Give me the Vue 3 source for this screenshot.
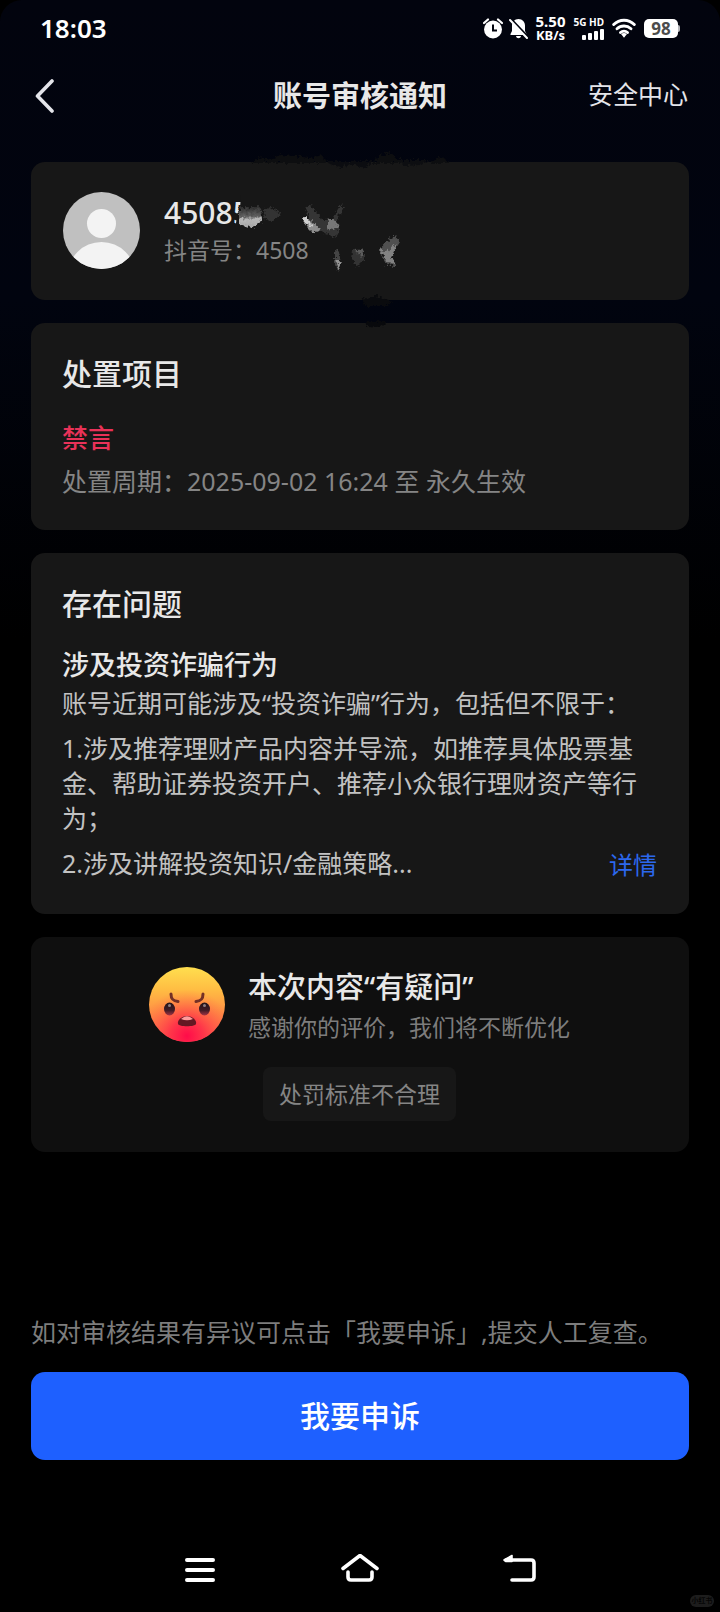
<script setup>
const problems = [
  '1.涉及推荐理财产品内容并导流，如推荐具体股票基金、帮助证券投资开户、推荐小众银行理财资产等行为；',
  '2.涉及讲解投资知识/金融策略...',
]
const signalBars = [5, 7, 9, 11]
</script>

<template>
  <div class="screen">
    <div class="phone">
      <div class="status">
        <span class="clock">18:03</span>
        <div class="status-icons">
          <svg class="alarm" viewBox="0 0 20 21" width="20" height="21" aria-hidden="true">
            <circle cx="10" cy="11.500" r="9" fill="#fff" />
            <path d="M1 5L5 1.500M19 5L15 1.500" stroke="#fff" stroke-width="2.200" stroke-linecap="round" />
            <path d="M10 6.500V12.500H14" fill="none" stroke="#02040e" stroke-width="2" />
          </svg>
          <svg class="bell" viewBox="0 0 19 21" width="19" height="21" aria-hidden="true">
            <path d="M9.500 1C5.500 1 3 4 3 7.500V13L1.500 16V17H17.500V16L16 13V7.500C16 4 13.500 1 9.500 1ZM7 18H12C11.500 21 7.500 21 7 18Z" fill="#fff" />
            <path d="M0.500 0L19 19.500" stroke="#02040e" stroke-width="3" />
            <path d="M1 2L18 20" stroke="#fff" stroke-width="2" stroke-linecap="round" />
          </svg>
          <div class="speed"><span>5.50</span><span>KB/s</span></div>
          <div class="network">
            <span>5G HD</span>
            <div class="bars">
              <i v-for="h in signalBars" :key="h" :style="{ height: h + 'px' }"></i>
            </div>
          </div>
          <svg class="wifi" viewBox="0 0 24 20" width="24" height="20" aria-hidden="true">
            <g fill="none" stroke="#fff" stroke-width="2.900" stroke-linecap="round">
              <path d="M1.700 6.500C7.500 .8 16.500 .8 22.300 6.500" />
              <path d="M5 10.700C9 7 15 7 19 10.700" />
              <path d="M8.500 14.500C10.500 12.700 13.500 12.700 15.500 14.500" />
            </g>
            <path d="M9 16Q12 14 15 16L12 19.800Z" fill="#fff" />
          </svg>
          <div class="battery"><span>98</span></div>
        </div>
      </div>

      <header class="topbar">
        <button class="back" aria-label="返回">
          <svg viewBox="0 0 20 36" width="20" height="36" aria-hidden="true">
            <path d="M17 3L2.500 18L17 33" fill="none" stroke="#e4e5ea" stroke-width="3.600" stroke-linecap="round" stroke-linejoin="round" />
          </svg>
        </button>
        <h1>账号审核通知</h1>
        <a href="#" class="safety">安全中心</a>
      </header>

      <main>
        <section class="card profile">
          <svg class="avatar" viewBox="0 0 77 77" width="77" height="77" aria-hidden="true">
            <defs><clipPath id="face"><circle cx="38.500" cy="38.500" r="38.500" /></clipPath></defs>
            <g clip-path="url(#face)">
              <rect width="77" height="77" fill="#c0c0c0" />
              <circle cx="38.500" cy="31.500" r="14.500" fill="#f3f3f3" />
              <circle cx="38.500" cy="84" r="34" fill="#f3f3f3" />
            </g>
          </svg>
          <div class="who">
            <strong>45085</strong>
            <span>抖音号：4508</span>
          </div>
          <svg class="smudge" viewBox="215 145 250 190" width="250" height="190" aria-hidden="true">
            <defs>
              <filter id="rough" x="-10%" y="-20%" width="120%" height="140%" color-interpolation-filters="sRGB">
                <feTurbulence type="fractalNoise" baseFrequency=".35" numOctaves="2" seed="4" result="n" />
                <feDisplacementMap in="SourceGraphic" in2="n" scale="7" xChannelSelector="R" yChannelSelector="G" />
              </filter>
              <linearGradient id="fade" x1="0" y1="0" x2="0" y2="1">
                <stop offset="0" stop-color="#2c2c2c" /><stop offset=".45" stop-color="#606060" /><stop offset=".6" stop-color="#b8b8b8" /><stop offset="1" stop-color="#a5a5a5" />
              </linearGradient>
            </defs>
            <path d="M241 195H275V230H236V223L238 212L240 208Z" fill="#171717" />
            <g filter="url(#rough)">
              <path d="M252 163L259 157L268 160L280 155L296 156L309 158L322 155L327 163ZM372 163L380 155L390 153L399 160L430 163L440 157L449 161V163Z" fill="#0d0e10" />
              <path d="M326 161H372L366 168L350 164L342 168L330 164Z" fill="#0b0c10" />
              <path d="M398 160H430L420 165L404 166Z" fill="#0d0e11" />
              <path d="M362 299L376 296L392 301L388 306H366Z" fill="#0a0b0e" />
              <path d="M366 322H388L380 327L368 326Z" fill="#08090c" />
              <path d="M239 207L261 207L262 221L252 228L239 224Z" fill="url(#fade)" />
              <path d="M264 209L272 208L281 214L272 222L265 219Z" fill="#333" />
              <path d="M306 208L311 204L315 212L324 220L332 219L341 204L344 208L337 220L340 226L337 237L322 232L310 220Z" fill="#353535" />
              <path d="M303 217L310 220L321 230L313 233L306 226Z" fill="#8e8e8e" />
              <path d="M303 216L307 218L313 227L304 222Z" fill="#d0d0d0" />
              <path d="M328 220L333 219L340 227L326 230Z" fill="#777" />
              <path d="M335 250L339 251L341 264L338 270L335 264Z" fill="#444" />
              <path d="M336 260H341L339 271Z" fill="#929292" />
              <path d="M353 250L364 249L364 260L357 267L352 258Z" fill="#333" />
              <path d="M355 250L364 250L363 256L357 254Z" fill="#5c5c5c" />
              <path d="M388 240L395 236L400 242L391 256L395 266L387 265L379 250Z" fill="#505050" />
              <path d="M378 249L386 252L397 243L392 256L396 266L388 262Z" fill="#828282" />
            </g>
          </svg>
        </section>

        <section class="card measure">
          <h2>处置项目</h2>
          <h3 class="ban">禁言</h3>
          <p>处置周期：2025-09-02 16:24 至 永久生效</p>
        </section>

        <section class="card issue">
          <h2>存在问题</h2>
          <h3>涉及投资诈骗行为</h3>
          <p>账号近期可能涉及“投资诈骗”行为，包括但不限于：</p>
          <p class="item">{{ problems[0] }}</p>
          <div class="item last">
            <p>{{ problems[1] }}</p>
            <a href="#">详情</a>
          </div>
        </section>

        <section class="card feedback">
          <div class="rating">
            <svg viewBox="0 0 76 75" width="76" height="75" aria-hidden="true">
              <defs>
                <linearGradient id="skin" x1="0" y1="0" x2="0" y2="1">
                  <stop offset="0" stop-color="#ffdf4e" /><stop offset=".3" stop-color="#ffbd43" /><stop offset=".65" stop-color="#ff8945" /><stop offset="1" stop-color="#ff5a50" />
                </linearGradient>
                <radialGradient id="blush" cx=".5" cy=".92" r=".62">
                  <stop offset="0" stop-color="#ff0b49" /><stop offset=".35" stop-color="#ff2b49" stop-opacity=".85" /><stop offset="1" stop-color="#ff6845" stop-opacity="0" />
                </radialGradient>
                <linearGradient id="eye" x1="0" y1="0" x2="0" y2="1">
                  <stop offset="0" stop-color="#21161b" /><stop offset=".6" stop-color="#421b25" /><stop offset="1" stop-color="#a43345" />
                </linearGradient>
              </defs>
              <ellipse cx="38" cy="37.500" rx="38" ry="37.500" fill="url(#skin)" />
              <ellipse cx="38" cy="37.500" rx="38" ry="37.500" fill="url(#blush)" />
              <path d="M22 27C22 32 24 34 29 34.500M54 27C54 32 52 34 47 34.500" fill="none" stroke="#743026" stroke-width="3" stroke-linecap="round" />
              <ellipse cx="20.500" cy="42" rx="5.500" ry="6.500" fill="url(#eye)" />
              <ellipse cx="55.500" cy="42" rx="5.500" ry="6.500" fill="url(#eye)" />
              <circle cx="20.500" cy="38.500" r="1.500" fill="#8d7e84" />
              <circle cx="55.500" cy="38.500" r="1.500" fill="#8d7e84" />
              <path d="M29 57C28 53 33 49 38 49C43 49 48 53 47 57C46 60 30 60 29 57Z" fill="#641823" />
              <path d="M32 52Q38 46.500 44 52Q38 54.500 32 52Z" fill="#ff9c9b" />
            </svg>
            <div class="rating-text">
              <h2>本次内容“有疑问”</h2>
              <p>感谢你的评价，我们将不断优化</p>
            </div>
          </div>
          <button class="reason">处罚标准不合理</button>
        </section>
      </main>

      <footer>
        <p>如对审核结果有异议可点击「我要申诉」,提交人工复查。</p>
        <button class="appeal">我要申诉</button>
      </footer>

      <nav class="system" aria-label="系统导航">
        <button aria-label="最近任务">
          <svg viewBox="0 0 40 32" width="40" height="32" aria-hidden="true">
            <path d="M7 6H33M7 16H33M7 26H33" stroke="#fff" stroke-width="4" stroke-linecap="round" />
          </svg>
        </button>
        <button aria-label="主页">
          <svg viewBox="0 0 40 32" width="40" height="32" aria-hidden="true">
            <path d="M3 14.500L20 1.500L37 14.500" fill="none" stroke="#fff" stroke-width="3.600" stroke-linecap="round" stroke-linejoin="round" />
            <path d="M8 18V23Q8 26 11 26H29Q32 26 32 23V18" fill="none" stroke="#fff" stroke-width="3.600" stroke-linecap="round" />
          </svg>
        </button>
        <button aria-label="返回上一页">
          <svg viewBox="0 0 40 32" width="40" height="32" aria-hidden="true">
            <path d="M6 6H31Q34 6 34 9V23Q34 26 31 26H12" fill="none" stroke="#fff" stroke-width="3.600" stroke-linecap="round" />
            <path d="M4 6L12 1.500V7.500H6Z" fill="#fff" stroke="#fff" stroke-width="1.600" stroke-linejoin="round" />
          </svg>
        </button>
      </nav>
      <span class="mark">小红书</span>
    </div>
  </div>
</template>

<style>
html,
body {
  margin: 0;
  background: #000;
}
</style>

<style scoped>
.screen {
  background: #000;
  color: #e8e8e8;
  font-family: "Noto Sans", "Noto Sans CJK SC", sans-serif;
}
.phone {
  position: relative;
  display: flex;
  flex-direction: column;
  min-height: 100vh;
  border-radius: 22px 22px 0 0;
  background: linear-gradient(#02040e 0, #01040f 300px, #000 640px);
}
h1, h2, h3, p {
  margin: 0;
  font-weight: 400;
}
button {
  margin: 0;
  padding: 0;
  border: 0;
  background: none;
  color: inherit;
  font-family: inherit;
  cursor: pointer;
}
a {
  text-decoration: none;
}
svg {
  display: block;
  flex: none;
}

.status {
  display: flex;
  align-items: center;
  justify-content: space-between;
  height: 56px;
  padding: 0 40px;
  color: #fff;
}
.clock {
  font-size: 26px;
  font-weight: 600;
}
.status-icons {
  display: flex;
  align-items: center;
  gap: 8px;
}
.alarm {
  margin-right: -2px;
}
.speed {
  display: flex;
  flex-direction: column;
  align-items: center;
  font-size: 15px;
  font-weight: 700;
  line-height: 14px;
}
.speed span:last-child {
  font-size: 13px;
}
.network {
  display: flex;
  flex-direction: column;
  align-items: flex-end;
  font-size: 10px;
  font-weight: 700;
  line-height: 11px;
}
.bars {
  display: flex;
  align-items: flex-end;
  gap: 2px;
  height: 12px;
}
.bars i {
  width: 4px;
  border-radius: 1px;
  background: #fff;
}
.battery {
  display: flex;
  align-items: center;
}
.battery span {
  width: 34px;
  height: 19px;
  border-radius: 5px;
  background: #fff;
  color: #4c4c4c;
  font-size: 17px;
  font-weight: 700;
  line-height: 19px;
  text-align: center;
}
.battery::after {
  content: "";
  width: 2px;
  height: 7px;
  border-radius: 0 2px 2px 0;
  background: #b5b6ba;
}

.topbar {
  display: grid;
  grid-template-columns: 1fr auto 1fr;
  align-items: center;
  height: 80px;
  padding: 0 32px;
}
.back {
  justify-self: start;
  padding: 0 3px;
}
.topbar h1 {
  font-size: 29px;
  font-weight: 600;
  line-height: 40px;
}
.safety {
  justify-self: end;
  padding-bottom: 4px;
  color: #e4e5ea;
  font-size: 25px;
  line-height: 36px;
}

main {
  display: flex;
  flex-direction: column;
  gap: 23px;
  padding: 26px 31px 0;
}
.card {
  padding: 31px 32px 31px 31px;
  border-radius: 14px;
  background: #171717;
}
.card h2 {
  font-size: 30px;
  font-weight: 500;
  line-height: 40px;
}
.card h3 {
  font-size: 27px;
  font-weight: 500;
  line-height: 36px;
}
.card p {
  font-size: 25px;
  line-height: 35px;
}

.card.profile {
  position: relative;
  display: flex;
  align-items: center;
  gap: 24px;
  padding: 30px 32px 31px;
}
.who {
  display: flex;
  flex-direction: column;
  padding-bottom: 2px;
}
.who strong {
  font-size: 30px;
  font-weight: 500;
  line-height: 40px;
}
.who span {
  color: #858585;
  font-size: 23px;
  line-height: 34px;
}
.smudge {
  position: absolute;
  top: -17px;
  left: 184px;
}

.measure h3 {
  margin: 26px 0 8px;
  font-size: 26px;
}
.measure .ban {
  color: #e93258;
}
.measure p {
  color: #858585;
}

.card.issue {
  padding-bottom: 30px;
}
.issue h2 {
  margin-bottom: 23px;
}
.issue h3 {
  margin-bottom: 3px;
}
.issue p {
  color: #c2c2c2;
}
.issue .item {
  margin-top: 10px;
}
.last {
  display: flex;
  justify-content: space-between;
}
.last a {
  color: #2c68ed;
  font-size: 24px;
  line-height: 38px;
}

.card.feedback {
  display: flex;
  flex-direction: column;
  align-items: center;
  gap: 22px;
  padding-top: 30px;
  background: #0f0f0f;
}
.rating {
  display: flex;
  align-items: flex-start;
  gap: 23px;
}
.rating-text h2 {
  margin-bottom: 3px;
  font-size: 29px;
}
.rating-text p {
  color: #7d7d7d;
  font-size: 23px;
}
.reason {
  padding: 0 16px;
  border-radius: 8px;
  background: #171717;
  color: #858585;
  font-size: 23px;
  line-height: 54px;
}

footer {
  margin-top: auto;
  padding: 140px 31px 0;
}
footer p {
  color: #7d7d7d;
  font-size: 25px;
  line-height: 36px;
}
.appeal {
  display: block;
  width: 100%;
  margin-top: 22px;
  border-radius: 14px;
  background: #1e60ff;
  color: #fff;
  font-size: 30px;
  font-weight: 500;
  line-height: 88px;
}

.system {
  display: flex;
  justify-content: center;
  gap: 120px;
  padding: 94px 0 26px;
}
.mark {
  position: absolute;
  right: 6px;
  bottom: 5px;
  width: 24px;
  border-radius: 6px;
  background: #1d1d1d;
  color: #050505;
  font-size: 7px;
  font-weight: 700;
  line-height: 12px;
  text-align: center;
}
</style>
